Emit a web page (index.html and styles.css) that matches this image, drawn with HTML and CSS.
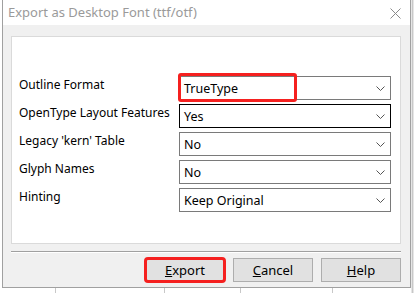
FILE: index.html
```html
<!DOCTYPE html>
<html>
  <head>
    <title>Export as Desktop Font (ttf/otf)</title>
    <link rel="stylesheet" href="styles.css">
  </head>
  <body>
  <div class="dialog">
    <div class="titlebar">
      <span class="title">Export as Desktop Font (ttf/otf)</span>
      <svg class="close" width="11" height="11" viewBox="0 0 11 11">
        <path d="M0.5 0.5 L10.5 10.5 M10.5 0.5 L0.5 10.5" stroke="#8a8a8a" stroke-width="1" fill="none"/>
      </svg>
    </div>
    <div class="panel">
      <div class="form">
        <label class="lbl">Outline Format</label>
        <div class="combo">
          <span class="value">TrueType</span>
          <svg class="chev" width="9" height="5" viewBox="0 0 9 5"><path d="M0.5 0.5 L4.5 4.5 L8.5 0.5" stroke="#555" fill="none"/></svg>
          <span class="mark"></span>
        </div>

        <label class="lbl">OpenType Layout Features</label>
        <div class="combo focus">
          <span class="value">Yes</span>
          <svg class="chev" width="9" height="5" viewBox="0 0 9 5"><path d="M0.5 0.5 L4.5 4.5 L8.5 0.5" stroke="#555" fill="none"/></svg>
        </div>

        <label class="lbl">Legacy 'kern' Table</label>
        <div class="combo">
          <span class="value">No</span>
          <svg class="chev" width="9" height="5" viewBox="0 0 9 5"><path d="M0.5 0.5 L4.5 4.5 L8.5 0.5" stroke="#555" fill="none"/></svg>
        </div>

        <label class="lbl">Glyph Names</label>
        <div class="combo">
          <span class="value">No</span>
          <svg class="chev" width="9" height="5" viewBox="0 0 9 5"><path d="M0.5 0.5 L4.5 4.5 L8.5 0.5" stroke="#555" fill="none"/></svg>
        </div>

        <label class="lbl">Hinting</label>
        <div class="combo">
          <span class="value">Keep Original</span>
          <svg class="chev" width="9" height="5" viewBox="0 0 9 5"><path d="M0.5 0.5 L4.5 4.5 L8.5 0.5" stroke="#555" fill="none"/></svg>
        </div>
      </div>
    </div>
    <div class="sep"></div>
    <div class="buttons">
      <button class="btn marked"><u>E</u>xport</button>
      <button class="btn"><u>C</u>ancel</button>
      <button class="btn"><u>H</u>elp</button>
    </div>
  </div>
  </body>
</html>
```

FILE: styles.css
```css
* {
  box-sizing: border-box;
  }
body {
  margin: 0;
  width: 414px;
  height: 293px;
  overflow: hidden;
  background-color: #fff;
  background-image:
    linear-gradient(to right, transparent 411px, #e6e6e6 411px, #e6e6e6 412px, #c8c8c8 412px, #c8c8c8 413px, #e6e6e6 413px),
    linear-gradient(to right, transparent 55px, #c8c8c8 55px, #c8c8c8 56px, transparent 56px, transparent 164px, #c8c8c8 164px, #c8c8c8 165px, transparent 165px, transparent 240px, #c8c8c8 240px, #c8c8c8 241px, transparent 241px, transparent 332px, #c8c8c8 332px, #c8c8c8 333px, transparent 333px);
  font: 12px "Noto Sans", "Liberation Sans", sans-serif;
  color: #000;
  }
.dialog {
  position: relative;
  margin-left: 2px;
  width: 409px;
  height: 288px;
  border: 1px solid #a0a0a0;
  border-top: none;
  background: #f0f0f0;
  display: flex;
  flex-direction: column;
  }
.titlebar {
  height: 25px;
  flex: none;
  background: #fff;
  display: flex;
  align-items: center;
  justify-content: space-between;
  padding: 0 9px 2px 5px;
  }
.title {
  color: #9a9a9a;
  font-size: 13px;
  }
.close {
  margin-top: 3px;
  }
.panel {
  flex: none;
  margin: 11px 9px 0 8px;
  height: 208px;
  background: #fff;
  border: 1px solid #dadada;
  padding: 39px 9px 0 7px;
  }
.form {
  display: grid;
  grid-template-columns: 160px 212px;
  grid-auto-rows: 24px;
  row-gap: 4px;
  }
.lbl {
  line-height: 18px;
  white-space: nowrap;
  }
.combo {
  position: relative;
  display: flex;
  align-items: center;
  justify-content: space-between;
  border: 1px solid #7a7a7a;
  background: #fff;
  padding: 0 5px 0 4px;
  }
.combo.focus {
  border-color: #000;
  }
.value {
  font-size: 12.5px;
  }
.chev {
  margin-top: 1px;
  }
.mark {
  position: absolute;
  left: -2px;
  top: -4px;
  width: 119px;
  height: 29px;
  border: 3px solid #f5201f;
  border-radius: 3px;
  }
.sep {
  flex: none;
  margin: 7px 9px 0 8px;
  height: 2px;
  border-top: 1px solid #a0a0a0;
  border-bottom: 1px solid #fff;
  }
.buttons {
  display: flex;
  justify-content: flex-end;
  gap: 8px;
  margin: 5px 9px 0 0;
  }
.btn {
  width: 80px;
  height: 24px;
  background: #e1e1e1;
  border: 1px solid #adadad;
  font: 13px "Noto Sans", "Liberation Sans", sans-serif;
  color: #000;
  padding: 0;
  }
.btn.marked {
  border-radius: 3px;
  outline: 3px solid #f5201f;
  outline-offset: -2px;
  }
```
